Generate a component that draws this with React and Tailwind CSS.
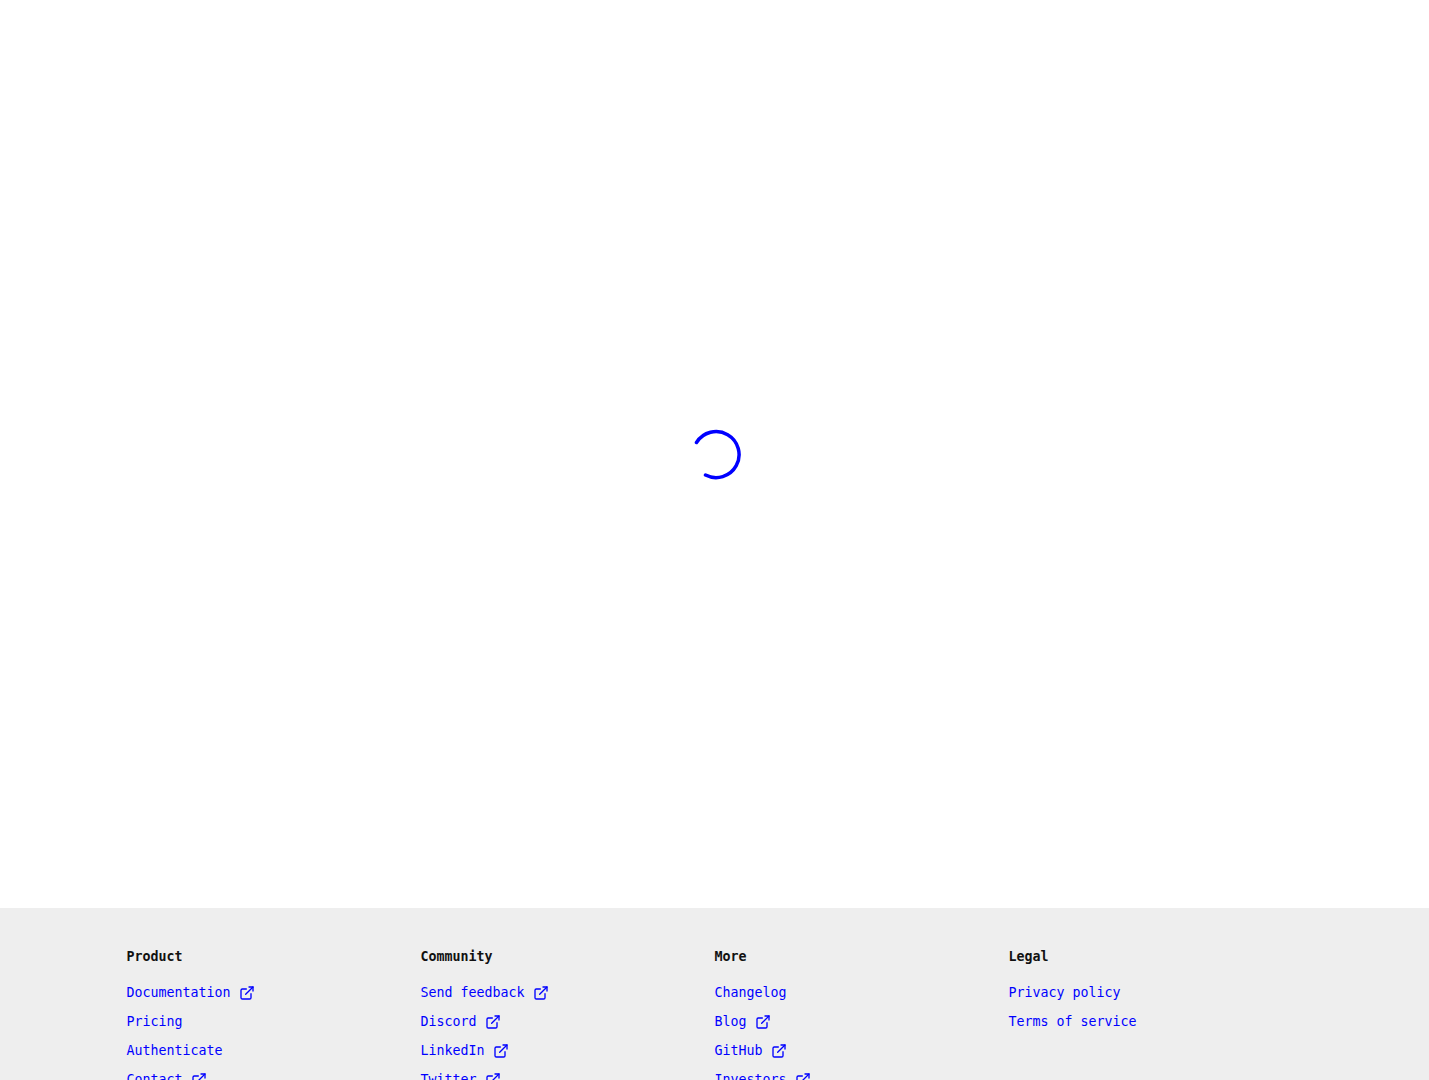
import React from 'react';
import { ExternalLink } from 'lucide-react';

const columns = [
    {
        title: 'Product',
        links: [
            { label: 'Documentation', external: true },
            { label: 'Pricing' },
            { label: 'Authenticate' },
            { label: 'Contact', external: true },
        ],
    },
    {
        title: 'Community',
        links: [
            { label: 'Send feedback', external: true },
            { label: 'Discord', external: true },
            { label: 'LinkedIn', external: true },
            { label: 'Twitter', external: true },
        ],
    },
    {
        title: 'More',
        links: [
            { label: 'Changelog' },
            { label: 'Blog', external: true },
            { label: 'GitHub', external: true },
            { label: 'Investors', external: true },
        ],
    },
    {
        title: 'Legal',
        links: [{ label: 'Privacy policy' }, { label: 'Terms of service' }],
    },
];

export default function App() {
    return (
        <div className="h-screen overflow-hidden flex flex-col bg-white font-['DejaVu_Sans_Mono',monospace] text-[13.3px]">
            {/* Loading spinner */}
            <main className="h-[908px] shrink-0 flex items-center justify-center">
                <svg width="52" height="52" viewBox="0 0 52 52" fill="none" className="text-[#0000ff]">
                    <path
                        d="M7.5 14.5 A23 23 0 1 1 16.5 47"
                        stroke="currentColor"
                        strokeWidth="3.5"
                        strokeLinecap="round"
                    />
                </svg>
            </main>

            {/* Footer */}
            <footer className="bg-[#eeeeee] pt-10 pb-10">
                <div className="w-[1176px] mx-auto grid grid-cols-4">
                    {columns.map((col) => (
                        <div key={col.title}>
                            <h4 className="font-bold text-[#111111] leading-[18px] mb-[18px]">{col.title}</h4>
                            <ul className="flex flex-col gap-[11px]">
                                {col.links.map((link) => (
                                    <li key={link.label} className="leading-[18px]">
                                        <a href="#" className="text-[#0000ff] inline-flex items-center">
                                            {link.label}
                                            {link.external && <ExternalLink size={16} className="ml-[8px]" />}
                                        </a>
                                    </li>
                                ))}
                            </ul>
                        </div>
                    ))}
                </div>
            </footer>
        </div>
    );
}
